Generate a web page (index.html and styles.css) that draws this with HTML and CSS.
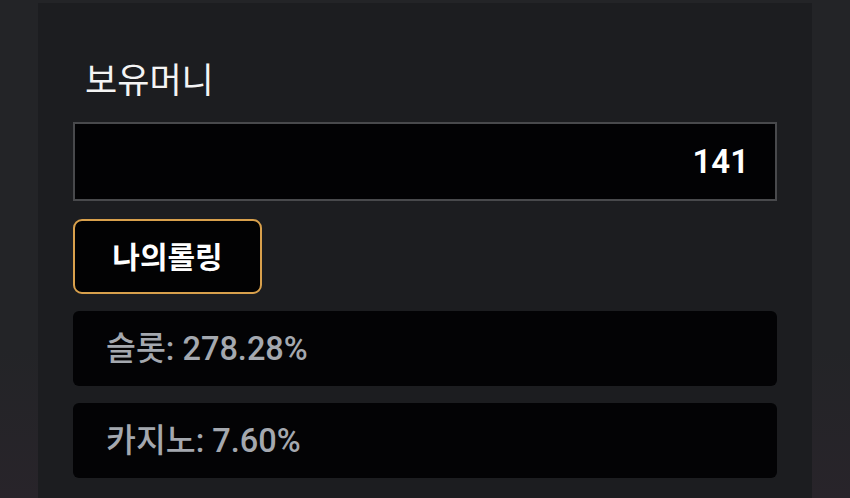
FILE: index.html
```html
<!DOCTYPE html>
<html lang="ko">
<head>
<meta charset="utf-8">
<link rel="stylesheet" href="styles.css">
</head>
<body>
<main class="panel">
  <div class="label">보유머니</div>
  <div class="money">141</div>
  <button class="rolling">나의롤링</button>
  <div class="stat">슬롯: 278.28%</div>
  <div class="stat">카지노: 7.60%</div>
</main>
</body>
</html>
```
FILE: styles.css
```css
html, body {
  margin: 0;
  padding: 0;
  height: 100%;
}
body {
  background: linear-gradient(180deg, #232427 0%, #232427 70%, #28242a 100%);
  font-family: Roboto, "Noto Sans CJK KR", sans-serif;
  padding: 3px 38px 0 38px;
  box-sizing: border-box;
  overflow: hidden;
  display: flex;
  flex-direction: column;
}
.panel {
  flex: 1;
  background: #1c1d20;
  padding: 55px 35px 0 35px;
  display: flex;
  flex-direction: column;
  align-items: flex-start;
  overflow: hidden;
}
.label {
  font-family: "Noto Sans CJK KR", sans-serif;
  font-size: 35px;
  line-height: 40px;
  color: #f4f4f4;
  padding-left: 12px;
  margin-bottom: 24px;
}
.money {
  box-sizing: border-box;
  flex: none;
  width: 100%;
  height: 79px;
  border: 2px solid #48494c;
  background: #020204;
  color: #ffffff;
  font-size: 33px;
  font-weight: 600;
  display: flex;
  align-items: center;
  justify-content: flex-end;
  padding-right: 26px;
}
.rolling {
  box-sizing: border-box;
  flex: none;
  margin-top: 18px;
  width: 189px;
  height: 75px;
  border: 2px solid #d8a04c;
  border-radius: 9px;
  background: #020203;
  color: #ffffff;
  font-family: Roboto, "Noto Sans CJK KR", sans-serif;
  font-size: 30px;
  font-weight: 700;
  padding: 0 0 3px 0;
}
.stat {
  box-sizing: border-box;
  flex: none;
  width: 100%;
  height: 75px;
  margin-top: 17px;
  border-radius: 6px;
  background: #030305;
  color: #a4a8af;
  font-size: 32.5px;
  font-weight: 500;
  display: flex;
  align-items: center;
  padding: 0 0 6px 33px;
}
```
